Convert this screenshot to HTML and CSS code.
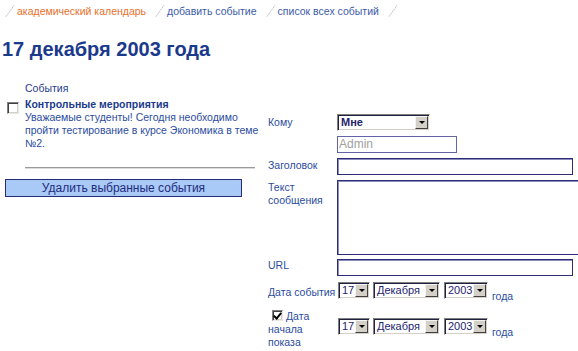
FILE: index.html
```html
<!DOCTYPE html>
<html lang="ru">

<head>
  <meta charset="UTF-8">
  <meta name="viewport" content="width=device-width, initial-scale=1.0">
  <title>Календарь событий</title>
  <link rel="stylesheet" href="styles.css">
</head>

<body>
  <div class="nav">
    <svg class="slash" width="10" height="12" viewBox="0 0 10 12"><line x1="1" y1="11.5" x2="9" y2="0.5" /></svg>
    <a class="nav-link active">академический календарь</a>
    <svg class="slash" width="10" height="12" viewBox="0 0 10 12"><line x1="1" y1="11.5" x2="9" y2="0.5" /></svg>
    <a class="nav-link">добавить событие</a>
    <svg class="slash" width="10" height="12" viewBox="0 0 10 12"><line x1="1" y1="11.5" x2="9" y2="0.5" /></svg>
    <a class="nav-link">список всех событий</a>
    <svg class="slash" width="10" height="12" viewBox="0 0 10 12"><line x1="1" y1="11.5" x2="9" y2="0.5" /></svg>
  </div>

  <h1 class="day-title">17 декабря 2003 года</h1>

  <div class="content">
    <div class="events">
      <div class="events-title">События</div>
      <div class="event">
        <span class="checkbox"></span>
        <div class="event-body">
          <div class="event-name">Контрольные мероприятия</div>
          <div class="event-text">Уважаемые студенты! Сегодня необходимо пройти тестирование в курсе Экономика в теме №2.</div>
        </div>
      </div>
      <div class="divider"></div>
      <button class="delete-btn">Удалить выбранные события</button>
    </div>

    <div class="form">
      <div class="row row-to">
        <div class="label">Кому</div>
        <div class="select select-to">
          <span class="select-value bold">Мне</span>
          <span class="select-btn"><span class="arrow"></span></span>
        </div>
      </div>
      <div class="row row-author">
        <div class="label"></div>
        <div class="input input-author">Admin</div>
      </div>
      <div class="row row-title">
        <div class="label">Заголовок</div>
        <div class="input input-wide"></div>
      </div>
      <div class="row row-text">
        <div class="label">Текст сообщения</div>
        <div class="input textarea"></div>
      </div>
      <div class="row row-url">
        <div class="label">URL</div>
        <div class="input input-wide"></div>
      </div>
      <div class="row row-date">
        <div class="label label-date">Дата события</div>
        <div class="date">
          <div class="select select-day">
            <span class="select-value">17</span>
            <span class="select-btn"><span class="arrow"></span></span>
          </div>
          <div class="select select-month">
            <span class="select-value">Декабря</span>
            <span class="select-btn"><span class="arrow"></span></span>
          </div>
          <div class="select select-year">
            <span class="select-value">2003</span>
            <span class="select-btn"><span class="arrow"></span></span>
          </div>
          <span class="year-word">года</span>
        </div>
      </div>
      <div class="row row-show">
        <div class="label label-show"><span class="checkbox checked"></span>Дата начала показа</div>
        <div class="date date-show">
          <div class="select select-day">
            <span class="select-value">17</span>
            <span class="select-btn"><span class="arrow"></span></span>
          </div>
          <div class="select select-month">
            <span class="select-value">Декабря</span>
            <span class="select-btn"><span class="arrow"></span></span>
          </div>
          <div class="select select-year">
            <span class="select-value">2003</span>
            <span class="select-btn"><span class="arrow"></span></span>
          </div>
          <span class="year-word">года</span>
        </div>
      </div>
    </div>
  </div>
</body>

</html>
```

FILE: styles.css
```css
* {
  margin: 0;
  padding: 0;
  box-sizing: border-box;
}

body {
  width: 578px;
  height: 351px;
  overflow: hidden;
  background-color: #ffffff;
  font-family: "Liberation Sans", Arial, sans-serif;
  font-size: 10.5px;
  line-height: 13px;
  color: #2b4c9e;
}

/* top menu */
.nav {
  display: flex;
  align-items: center;
  height: 20px;
  padding-left: 5px;
  padding-top: 2px;
}

.slash {
  margin-right: 2px;
}

.slash line {
  stroke: #b4b4b4;
  stroke-width: 1;
  stroke-dasharray: 1.5 1;
}

.nav-link {
  margin-right: 9px;
  color: #3c5ba8;
}

.nav-link.active {
  color: #e8702c;
}

.day-title {
  margin-top: 17px;
  padding-left: 2px;
  font-size: 20px;
  line-height: 24px;
  font-weight: bold;
  color: #1b3a8c;
}

.content {
  display: flex;
}

/* events list */
.events {
  width: 268px;
  flex-shrink: 0;
  padding-top: 21px;
}

.events-title {
  padding-left: 25px;
  color: #1f3c8c;
}

.event {
  display: flex;
  margin-top: 3px;
}

.checkbox {
  display: inline-block;
  width: 12px;
  height: 12px;
  background: #ffffff;
  border-top: 1px solid #808080;
  border-left: 1px solid #808080;
  border-right: 1px solid #e8e8e8;
  border-bottom: 1px solid #e8e8e8;
  box-shadow: inset 1px 1px 0 #404040, inset -1px -1px 0 #d4d0c8;
}

.event .checkbox {
  margin: 4px 6px 0 7px;
  flex-shrink: 0;
}

.event-body {
  width: 236px;
}

.event-name {
  font-weight: bold;
  color: #1b3a8c;
}

.divider {
  width: 230px;
  margin: 17px 0 0 25px;
  border-top: 1px solid #9a9a9a;
  border-bottom: 1px solid #dcdcdc;
}

.delete-btn {
  display: block;
  width: 237px;
  height: 18px;
  margin: 10px 0 0 5px;
  background-color: #a9c9f6;
  border: 1px solid #262c74;
  font-family: "Liberation Sans", Arial, sans-serif;
  font-size: 12px;
  color: #1e2c7e;
}

/* message form */
.form {
  padding-top: 53px;
}

.row {
  display: flex;
  margin-bottom: 5px;
}

.label {
  width: 69px;
  flex-shrink: 0;
}

.row-to .label {
  padding-top: 2px;
}

.row-title .label {
  padding-top: 1px;
}

.row-text .label {
  padding-top: 1px;
}

.row-url {
  margin-top: -1px;
}

.label-date {
  padding-top: 5px;
}

.row-date {
  margin-bottom: 11px;
}

.label-show .checkbox {
  width: 11px;
  height: 11px;
  margin: 0 3px -1px 4px;
  position: relative;
}

.checkbox.checked::after {
  content: "";
  position: absolute;
  left: 2px;
  top: 0px;
  width: 3px;
  height: 6px;
  border-right: 2px solid #000000;
  border-bottom: 2px solid #000000;
  transform: rotate(40deg);
}

.input {
  height: 17px;
  background: #ffffff;
  border: 1px solid #2e2e78;
  box-shadow: inset 1px 1px 0 #8c8cbc;
}

.input-author {
  width: 120px;
  padding-left: 1px;
  border-color: #6464a4;
  box-shadow: none;
  color: #a0a0a0;
  font-size: 12px;
  line-height: 15px;
}

.input-wide {
  width: 236px;
}

.textarea {
  width: 250px;
  height: 75px;
}

/* classic drop-down boxes */
.select {
  display: flex;
  align-items: center;
  height: 17px;
  background: #ffffff;
  border-top: 1px solid #808080;
  border-left: 1px solid #808080;
  border-right: 1px solid #ffffff;
  border-bottom: 1px solid #ffffff;
  box-shadow: inset 1px 1px 0 #202040, inset -1px -1px 0 #d4d0c8;
  padding: 1px;
}

.select-value {
  flex: 1;
  padding-left: 2px;
  font-size: 11px;
  line-height: 13px;
  color: #1e2470;
}

.select-value.bold {
  font-weight: bold;
}

.select-btn {
  display: flex;
  align-items: center;
  justify-content: center;
  width: 13px;
  height: 13px;
  background: #d4d0c8;
  border-top: 1px solid #f4f4f4;
  border-left: 1px solid #f4f4f4;
  border-right: 1px solid #404040;
  border-bottom: 1px solid #404040;
}

.arrow {
  width: 0;
  height: 0;
  border-left: 3px solid transparent;
  border-right: 3px solid transparent;
  border-top: 3px solid #000000;
}

.select-to {
  width: 93px;
}

.date {
  display: flex;
  align-items: flex-end;
  margin-left: 1px;
}

.date-show {
  margin-top: 8px;
  align-self: flex-start;
}

.select-day {
  width: 32px;
  margin-right: 3px;
}

.select-month {
  width: 67px;
  margin-right: 4px;
}

.select-year {
  width: 44px;
  margin-right: 4px;
}

.year-word {
  margin-bottom: -4px;
}
```
